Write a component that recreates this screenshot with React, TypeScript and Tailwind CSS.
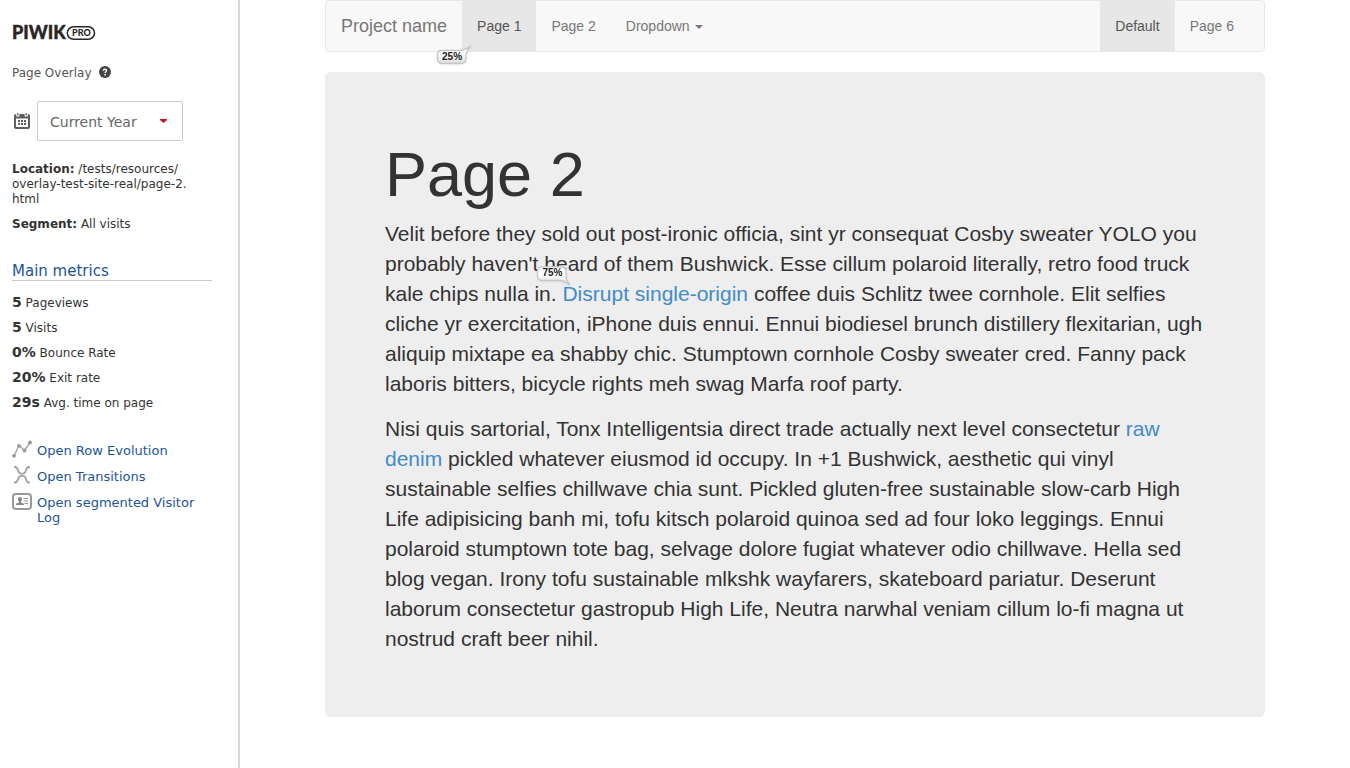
import { type ReactNode } from "react";

const metrics = [
  { value: "5", label: "Pageviews" },
  { value: "5", label: "Visits" },
  { value: "0%", label: "Bounce Rate" },
  { value: "20%", label: "Exit rate" },
  { value: "29s", label: "Avg. time on page" },
];

function Logo() {
  return (
    <svg width="86" height="24" viewBox="-1 -4 86 24" role="img" aria-label="Piwik PRO" className="-my-1 -ml-px block">
      <text x="0" y="14.2" fill="#2b2523" stroke="#2b2523" strokeWidth="0.4" strokeLinejoin="round" fontFamily="Lato, sans-serif" fontWeight="900" fontSize="18">
        PIWIK
      </text>
      <rect x="55.3" y="1.8" width="27.2" height="12.4" rx="6.2" fill="none" stroke="#2b2523" strokeWidth="1.5" />
      <text x="60" y="11.2" fill="#2b2523" fontFamily="Lato, sans-serif" fontWeight="900" fontSize="9">
        PRO
      </text>
    </svg>
  );
}

function HelpIcon() {
  return (
    <svg width="12" height="12" viewBox="0 0 12 12" aria-hidden="true" className="block">
      <circle cx="6" cy="6" r="6" fill="#444" />
      <path d="M4.4 4.7C4.4 2.7 7.6 2.8 7.6 4.6C7.6 5.7 6.1 5.7 6.1 7" fill="none" stroke="#fff" strokeWidth="1.4" />
      <rect x="5.3" y="8" width="1.6" height="1.5" fill="#fff" />
    </svg>
  );
}

function CalendarIcon() {
  return (
    <svg width="16" height="17" viewBox="0 0 16 17" aria-hidden="true">
      <path
        fill="#5f5f5f"
        fillRule="evenodd"
        d="M2 1H2.2V3.6H5.4V1H10.6V3.6H13.8V1H14A2 2 0 0 1 16 3V14A2 2 0 0 1 14 16H2A2 2 0 0 1 0 14V3A2 2 0 0 1 2 1ZM2 5.5V14H14V5.5Z"
      />
      <path fill="#5f5f5f" d="M3.2 0H4.4V2.6H3.2ZM11.6 0H12.8V2.6H11.6Z" />
      <path fill="#5f5f5f" d="M4 7H6V9H4ZM7 7H9V9H7ZM10 7H12V9H10ZM4 10H6V12H4ZM7 10H9V12H7ZM10 10H12V12H10Z" />
    </svg>
  );
}

function EvolutionIcon() {
  return (
    <svg width="20" height="18" viewBox="0 0 20 18" aria-hidden="true" className="block">
      <path d="M2 16L7 5.5L12.5 10.5L18 2.5" fill="none" stroke="#a3a3a3" strokeWidth="1.4" />
      <g fill="#999">
        <circle cx="2" cy="15.8" r="1.9" />
        <circle cx="7" cy="5.8" r="1.9" />
        <circle cx="12.5" cy="10.5" r="1.9" />
        <circle cx="18" cy="2.5" r="1.9" />
      </g>
    </svg>
  );
}

function TransitionsIcon() {
  return (
    <svg width="20" height="18" viewBox="0 0 20 18" aria-hidden="true" className="block">
      <path
        d="M2 1H3C7 1 5 7.6 9 7.6H11C15 7.6 13 1 17 1H18M2 16.5H3C7 16.5 5 9.9 9 9.9H11C15 9.9 13 16.5 17 16.5H18"
        fill="none"
        stroke="#a3a3a3"
        strokeWidth="1.9"
      />
    </svg>
  );
}

function VisitorIcon() {
  return (
    <svg width="20" height="18" viewBox="0 0 20 18" aria-hidden="true" className="block">
      <rect x="1" y="2" width="18" height="15" rx="3" fill="none" stroke="#999" strokeWidth="2" />
      <path d="M4 13V11.7L7 10.5V9.6C5.4 8.4 5.5 5 8 5S10.6 8.4 9 9.6V10.5L12 11.7V13Z" fill="#888" />
      <path d="M11.5 6.5H16M11.5 9H16M12.5 11.5H16" stroke="#999" strokeWidth="1" />
    </svg>
  );
}

const actions = [
  { label: "Open Row Evolution", icon: <EvolutionIcon /> },
  { label: "Open Transitions", icon: <TransitionsIcon /> },
  { label: "Open segmented Visitor Log", icon: <VisitorIcon /> },
];

function Bubble({ children, tail }: { children: ReactNode; tail: "up" | "down" }) {
  const up = tail === "up";
  return (
    <span
      className={
        up
          ? "absolute top-11 -left-6.5 z-10 block h-5 w-9"
          : "absolute -top-4 -left-6.5 z-10 block h-5 w-9"
      }
    >
      <svg width="36" height="22" viewBox="0 0 36 22" aria-hidden="true" className="absolute inset-0 drop-shadow-xs">
        <defs>
          <linearGradient id={up ? "fill-up" : "fill-down"} x1="0" y1="0" x2="0" y2="1">
            <stop offset="0.4" stopColor="#fff" />
            <stop offset="1" stopColor="#dcdcdc" />
          </linearGradient>
        </defs>
        <path
          d={
            up
              ? "M6 5.5H24C28 5.5 30 3.5 34 1.5C32 4.5 30 6.5 30 9.5V13.5Q30 18.5 25 18.5H6Q1.5 18.5 1.5 14V10Q1.5 5.5 6 5.5Z"
              : "M6 0.8H25Q30 0.8 30 5.5V10C30 13.5 31.5 16 34 19C31 17 28 14.5 24 14.5H6Q1.5 14.5 1.5 10V5.5Q1.5 0.8 6 0.8Z"
          }
          fill={up ? "url(#fill-up)" : "url(#fill-down)"}
          stroke="#c4c6c8"
          strokeWidth="1.3"
        />
      </svg>
      <span
        className={
          up
            ? "absolute top-1.5 left-1.5 text-[10px] leading-3 font-bold text-[#222]"
            : "absolute top-px left-1.5 text-[10px] leading-3 font-bold text-[#222]"
        }
      >
        {children}
      </span>
    </span>
  );
}

function Sidebar() {
  return (
    <aside className="w-60 shrink-0 border-r-2 border-[#d9d9d9] pt-[25px] pr-[26px] pl-3 font-['DejaVu_Sans',sans-serif] text-xs leading-[15px] text-[#333]">
      <Logo />
      <div className="mt-[25px] flex items-start gap-[7px] text-[#555]">
        <h1>Page Overlay</h1>
        <button type="button" aria-label="Help" className="block">
          <HelpIcon />
        </button>
      </div>
      <div className="mt-5 flex items-center gap-[7px] pl-0.5">
        <CalendarIcon />
        <div className="relative h-10 w-[146px]">
          <select
            aria-label="Date range"
            className="h-full w-full appearance-none rounded-xs border border-[#ccc] bg-white pt-0.5 pl-3 text-sm text-[#666]"
          >
            <option>Current Year</option>
          </select>
          <svg width="7" height="4" viewBox="0 0 7 4" aria-hidden="true" className="pointer-events-none absolute top-[18px] right-4">
            <path d="M0 0H7V1L3.5 4L0 1Z" fill="#c9161d" />
          </svg>
        </div>
      </div>
      <p className="mt-[21px]">
        <b>Location:</b> /tests/<wbr />resources/
        <wbr />
        overlay-test-site-real/<wbr />page-2.
        <wbr />
        html
      </p>
      <p className="mt-2.5">
        <b>Segment:</b> All visits
      </p>
      <h2 className="mt-[30px] border-b border-[#ccc] text-[15px] leading-[18px] text-[#1d5499]">Main metrics</h2>
      <ul className="mt-[9px] flex flex-col">
        {metrics.map((m) => (
          <li key={m.label} className="h-[25px] leading-6">
            <strong className="text-sm leading-6">{m.value}</strong> {m.label}
          </li>
        ))}
      </ul>
      <ul className="mt-7 flex flex-col gap-[11px] text-[13px]">
        {actions.map((a) => (
          <li key={a.label} className="min-h-[15px]">
            <a href="#" className="flex items-start gap-[5px] text-[#1d5499]">
              <span className="-mt-[3px] -mb-2 shrink-0">{a.icon}</span>
              <span>{a.label}</span>
            </a>
          </li>
        ))}
      </ul>
    </aside>
  );
}

function NavItem({ children, active = false }: { children: ReactNode; active?: boolean }) {
  return (
    <li className="relative">
      <a
        href="#"
        className={
          active
            ? "flex items-center bg-[#e7e7e7] p-[15px] text-[#555]"
            : "flex items-center p-[15px] text-[#777]"
        }
      >
        {children}
      </a>
    </li>
  );
}

export default function App() {
  return (
    <div className="flex min-h-screen bg-white">
      <Sidebar />
      <main className="min-w-0 flex-1 font-['Liberation_Sans',Arial,sans-serif] text-[#333]">
        <div className="mx-auto max-w-[940px]">
          <nav className="mb-5 flex rounded border border-[#e7e7e7] bg-[#f8f8f8] text-sm leading-5">
            <a href="#" className="p-[15px] text-lg leading-5 text-[#777]">
              Project name
            </a>
            <ul className="flex">
              <NavItem active>
                Page 1<Bubble tail="up">25%</Bubble>
              </NavItem>
              <NavItem>Page 2</NavItem>
              <NavItem>
                Dropdown
                <svg width="8" height="4" viewBox="0 0 8 4" aria-hidden="true" className="mt-0.5 ml-[5px]">
                  <path d="M0 0H8L4 4Z" fill="#777" />
                </svg>
              </NavItem>
            </ul>
            <ul className="mr-[15px] ml-auto flex">
              <NavItem active>Default</NavItem>
              <NavItem>Page 6</NavItem>
            </ul>
          </nav>
          <section className="rounded-md bg-[#eee] px-[60px] pt-[68px] pb-[63px] text-[21px] leading-[30px]">
            <h1 className="mb-2.5 text-[63px] leading-[69px]">Page 2</h1>
            <p className="mb-[15px]">
              Velit before they sold out post-ironic officia, sint yr consequat Cosby sweater YOLO you probably
              haven't heard of them Bushwick. Esse cillum polaroid literally, retro food truck kale chips nulla in.{" "}
              <a href="#" className="relative text-[#428bca]">
                Disrupt single-origin
                <Bubble tail="down">75%</Bubble>
              </a>{" "}
              coffee duis Schlitz twee cornhole. Elit selfies cliche yr exercitation, iPhone duis ennui. Ennui
              biodiesel brunch distillery flexitarian, ugh aliquip mixtape ea shabby chic. Stumptown cornhole Cosby
              sweater cred. Fanny pack laboris bitters, bicycle rights meh swag Marfa roof party.
            </p>
            <p>
              Nisi quis sartorial, Tonx Intelligentsia direct trade actually next level consectetur{" "}
              <a href="#" className="text-[#428bca]">
                raw denim
              </a>{" "}
              pickled whatever eiusmod id occupy. In +1 Bushwick, aesthetic qui vinyl sustainable selfies chillwave
              chia sunt. Pickled gluten-free sustainable slow-carb High Life adipisicing banh mi, tofu kitsch
              polaroid quinoa sed ad four loko leggings. Ennui polaroid stumptown tote bag, selvage dolore fugiat
              whatever odio chillwave. Hella sed blog vegan. Irony tofu sustainable mlkshk wayfarers, skateboard
              pariatur. Deserunt laborum consectetur gastropub High Life, Neutra narwhal veniam cillum lo-fi magna
              ut nostrud craft beer nihil.
            </p>
          </section>
        </div>
      </main>
    </div>
  );
}
